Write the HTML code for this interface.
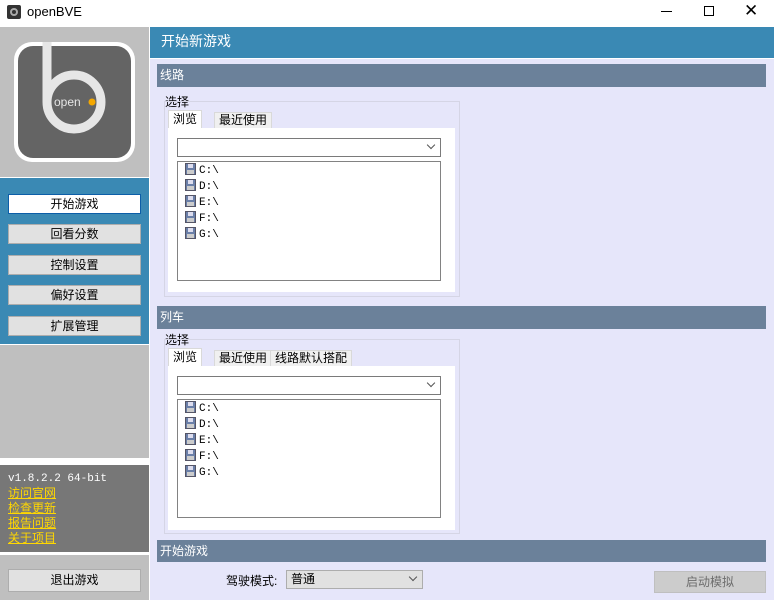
<!DOCTYPE html>
<html><head><meta charset="utf-8"><style>
*{margin:0;padding:0;box-sizing:border-box}
body{width:774px;height:600px;position:relative;overflow:hidden;background:#fff;font-family:"Liberation Sans","Noto Sans CJK SC",sans-serif;font-size:12px;color:#000}
.a{position:absolute}
.btn{position:absolute;left:8px;width:133px;height:20px;background:#e1e1e1;border:1px solid #adadad;text-align:center;line-height:18px;font-size:12px}
.hdr{position:absolute;left:157px;width:609px;background:#6b819a;color:#fff;font-size:12px;padding-left:3px}
.tab{position:absolute;height:18px;background:#f0f0f0;border:1px solid #d9d9d9;border-bottom:none;line-height:17px;padding:0 4px;font-size:12px}
.drv{position:absolute;left:7px;height:16px;font-family:"Liberation Mono",monospace;font-size:11px;line-height:16px}
.drv i{display:inline-block;width:11px;height:12px;background:#6a7fa8;vertical-align:-2px;margin-right:3px;position:relative;border:1px solid #556}
.drv i:after{content:"";position:absolute;left:2px;top:0;width:5px;height:4px;background:#dde}
.drv i:before{content:"";position:absolute;left:1px;bottom:0;width:7px;height:4px;background:#ccc}
.combo{position:absolute;background:#fff;border:1px solid #7a7a7a}
.combo:after{content:"";position:absolute;right:6px;top:3px;width:5px;height:5px;border-right:1px solid #555;border-bottom:1px solid #555;transform:rotate(45deg)}
.lnk{color:#ffd700;text-decoration:underline;font-size:12px;line-height:15px}
</style></head><body>
<div class="a" style="left:7px;top:5px;width:14px;height:14px;background:#333;border-radius:2px"></div>
<div class="a" style="left:10px;top:8px;width:8px;height:8px;border:2px solid #aaa;border-radius:50%"></div>
<div class="a" style="left:27px;top:4px;font-size:13px">openBVE</div>
<div class="a" style="left:661px;top:11px;width:11px;height:1px;background:#000"></div>
<div class="a" style="left:704px;top:6px;width:10px;height:10px;border:1px solid #000"></div>
<div class="a" style="left:744px;top:1px;font-size:17px;line-height:20px">✕</div>

<div class="a" style="left:0;top:27px;width:149px;height:150px;background:#bfbfbf"></div>
<div class="a" style="left:14px;top:42px;width:121px;height:120px;background:#fff;border-radius:18px"></div>
<div class="a" style="left:18px;top:46px;width:113px;height:112px;background:#646464;border-radius:15px"></div>
<svg class="a" style="left:14px;top:42px" width="121" height="120">
<line x1="33" y1="0" x2="33" y2="60" stroke="#e6e6e6" stroke-width="9"/>
<circle cx="60" cy="60" r="27" fill="none" stroke="#e6e6e6" stroke-width="9"/>
<text x="40" y="64" fill="#e6e6e6" font-size="12" font-family="Liberation Sans">open</text>
<circle cx="78" cy="60" r="3.5" fill="#f5a800"/>
</svg>
<div class="a" style="left:0;top:178px;width:149px;height:166px;background:#3a89b4"></div>
<div class="btn" style="top:194px;background:#fff;border-color:#0c5ea8">开始游戏</div>
<div class="btn" style="top:224px">回看分数</div>
<div class="btn" style="top:255px">控制设置</div>
<div class="btn" style="top:285px">偏好设置</div>
<div class="btn" style="top:316px">扩展管理</div>
<div class="a" style="left:0;top:345px;width:149px;height:113px;background:#bfbfbf"></div>
<div class="a" style="left:0;top:465px;width:149px;height:87px;background:#777;padding:7px 0 0 8px;color:#fff">
<div style="font-family:'Liberation Mono',monospace;font-size:11px;line-height:14px">v1.8.2.2 64-bit</div>
<div class="lnk">访问官网</div><div class="lnk">检查更新</div><div class="lnk">报告问题</div><div class="lnk">关于项目</div>
</div>
<div class="a" style="left:0;top:555px;width:149px;height:45px;background:#bfbfbf"></div>
<div class="btn" style="top:569px;height:23px;line-height:21px">退出游戏</div>

<div class="a" style="left:150px;top:27px;width:624px;height:31px;background:#3a89b4;color:#fff;font-size:14px;line-height:29px;padding-left:11px">开始新游戏</div>
<div class="a" style="left:150px;top:59px;width:624px;height:541px;background:#e6e6fa"></div>

<div class="hdr" style="top:64px;height:23px;line-height:23px">线路</div>
<div class="a" style="left:165px;top:93px">选择</div>
<div class="a" style="left:164px;top:101px;width:296px;height:196px;border:1px solid #d5d5e5"></div>
<div class="tab" style="left:168px;top:110px;background:#fff;height:19px">浏览</div>
<div class="tab" style="left:214px;top:112px;height:16px;line-height:15px">最近使用</div>
<div class="a" style="left:168px;top:128px;width:287px;height:164px;background:#fff"></div>
<div class="combo" style="left:177px;top:138px;width:264px;height:19px"></div>
<div class="a" style="left:177px;top:161px;width:264px;height:120px;background:#fff;border:1px solid #828282">
<div class="drv" style="top:1px"><i></i>C:\</div><div class="drv" style="top:17px"><i></i>D:\</div><div class="drv" style="top:33px"><i></i>E:\</div><div class="drv" style="top:49px"><i></i>F:\</div><div class="drv" style="top:65px"><i></i>G:\</div>
</div>

<div class="hdr" style="top:306px;height:23px;line-height:23px">列车</div>
<div class="a" style="left:165px;top:331px">选择</div>
<div class="a" style="left:164px;top:339px;width:296px;height:195px;border:1px solid #d5d5e5"></div>
<div class="tab" style="left:168px;top:348px;background:#fff;height:19px">浏览</div>
<div class="tab" style="left:214px;top:350px;height:16px;line-height:15px">最近使用</div>
<div class="tab" style="left:270px;top:350px;height:16px;line-height:15px">线路默认搭配</div>
<div class="a" style="left:168px;top:366px;width:287px;height:164px;background:#fff"></div>
<div class="combo" style="left:177px;top:376px;width:264px;height:19px"></div>
<div class="a" style="left:177px;top:399px;width:264px;height:119px;background:#fff;border:1px solid #828282">
<div class="drv" style="top:1px"><i></i>C:\</div><div class="drv" style="top:17px"><i></i>D:\</div><div class="drv" style="top:33px"><i></i>E:\</div><div class="drv" style="top:49px"><i></i>F:\</div><div class="drv" style="top:65px"><i></i>G:\</div>
</div>

<div class="hdr" style="top:540px;height:22px;line-height:22px">开始游戏</div>
<div class="a" style="left:226px;top:572px">驾驶模式:</div>
<div class="combo" style="left:286px;top:570px;width:137px;height:19px;background:#e1e1e1;border-color:#adadad;padding-left:4px;line-height:17px">普通</div>
<div class="a" style="left:654px;top:571px;width:112px;height:22px;background:#ccc;border:1px solid #bfbfbf;color:#6d6d6d;text-align:center;line-height:20px">启动模拟</div>
</body></html>
